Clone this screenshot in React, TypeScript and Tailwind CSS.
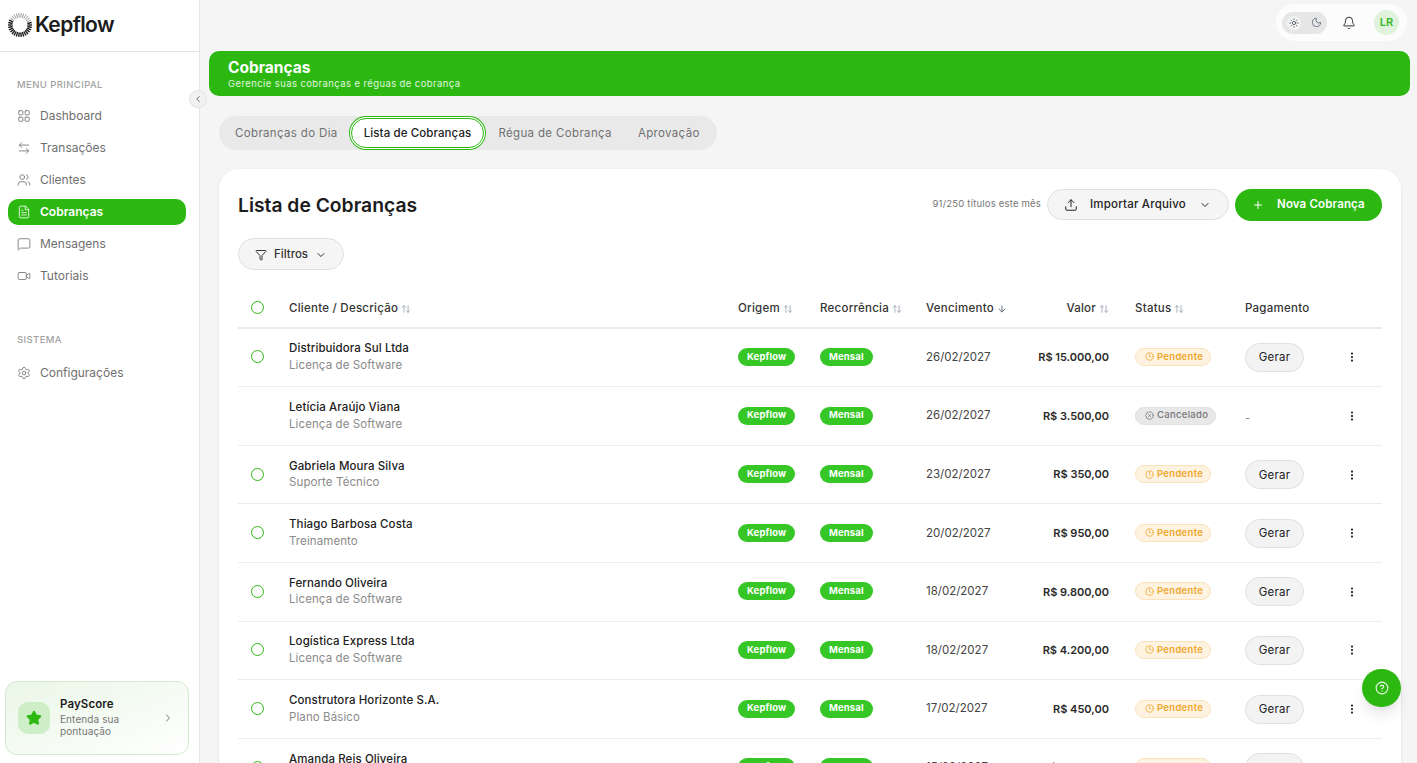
import {
  ArrowDown,
  ArrowLeftRight,
  ArrowUpDown,
  Bell,
  ChevronDown,
  ChevronLeft,
  ChevronRight,
  CircleHelp,
  CircleX,
  Clock,
  EllipsisVertical,
  FileText,
  Funnel,
  LayoutGrid,
  MessageSquare,
  Moon,
  Plus,
  Settings,
  Star,
  Sun,
  Upload,
  Users,
  Video,
} from "lucide-react";

const menu = [
  { label: "Dashboard", icon: LayoutGrid },
  { label: "Transações", icon: ArrowLeftRight },
  { label: "Clientes", icon: Users },
  { label: "Cobranças", icon: FileText, active: true },
  { label: "Mensagens", icon: MessageSquare },
  { label: "Tutoriais", icon: Video },
];

const rows = [
  { name: "Distribuidora Sul Ltda", desc: "Licença de Software", date: "26/02/2027", value: "R$ 15.000,00" },
  { name: "Letícia Araújo Viana", desc: "Licença de Software", date: "26/02/2027", value: "R$ 3.500,00", cancelled: true },
  { name: "Gabriela Moura Silva", desc: "Suporte Técnico", date: "23/02/2027", value: "R$ 350,00" },
  { name: "Thiago Barbosa Costa", desc: "Treinamento", date: "20/02/2027", value: "R$ 950,00" },
  { name: "Fernando Oliveira", desc: "Licença de Software", date: "18/02/2027", value: "R$ 9.800,00" },
  { name: "Logística Express Ltda", desc: "Licença de Software", date: "18/02/2027", value: "R$ 4.200,00" },
  { name: "Construtora Horizonte S.A.", desc: "Plano Básico", date: "17/02/2027", value: "R$ 450,00" },
  { name: "Amanda Reis Oliveira", desc: "Consultoria", date: "15/02/2027", value: "R$ 2.800,00" },
];

const gridCols = "grid grid-cols-[51px_449px_82px_106px_96px_113px_110px_77px_60px] items-center";

function Logo() {
  const rays = Array.from({ length: 30 }, (_, i) => i * 12);
  return (
    <svg width="26" height="26" viewBox="0 0 26 26" className="shrink-0">
      {rays.map((deg) => {
        const rad = (deg * Math.PI) / 180;
        // thick on the right and bottom, hairline on the upper left
        const thick = deg < 215 || deg > 345;
        return (
          <line
            key={deg}
            x1={13 + 7.5 * Math.cos(rad)}
            y1={13 + 7.5 * Math.sin(rad)}
            x2={13 + 12 * Math.cos(rad)}
            y2={13 + 12 * Math.sin(rad)}
            stroke={thick ? "#1c1c1c" : "#555"}
            strokeWidth={thick ? 1.4 : 0.6}
          />
        );
      })}
    </svg>
  );
}

function SortHead({ label }: { label: string }) {
  return (
    <span className="flex items-center gap-[3px]">
      {label}
      <ArrowUpDown className="w-[10px] h-[10px] text-gray-400" />
    </span>
  );
}

function Sidebar() {
  return (
    <aside className="relative w-[200px] shrink-0 h-full flex flex-col bg-white border-r border-[#e6e6e6]">
      <div className="h-[52px] shrink-0 flex items-center gap-[2px] pl-[7px] border-b border-[#e4e4e4] pb-px">
        <Logo />
        <span className="text-[21px] font-semibold text-[#1c1c1c] tracking-[-0.6px]">Kepflow</span>
      </div>

      <button className="absolute left-[189px] top-[90px] w-[18px] h-[18px] rounded-full bg-[#f1f1f1] border border-[#e2e2e2] flex items-center justify-center text-gray-600">
        <ChevronLeft className="w-[10px] h-[10px]" />
      </button>

      <p className="mt-[26px] ml-[17px] text-[9.5px] tracking-[0.4px] text-[#a3a3a3] font-medium">MENU PRINCIPAL</p>
      <nav className="mt-[11px] pl-2 pr-[13px] flex flex-col gap-1.5">
        {menu.map((item) => (
          <a
            key={item.label}
            className={`h-[26px] flex items-center gap-[9px] pl-[9px] rounded-[10px] text-[12px] ${
              item.active ? "bg-[#2cb811] text-white font-semibold" : "text-[#6f6f6f]"
            }`}
          >
            <item.icon className="w-[14px] h-[14px]" strokeWidth={1.4} />
            {item.label}
          </a>
        ))}
      </nav>

      <p className="mt-[44px] ml-[17px] text-[9.5px] tracking-[0.4px] text-[#a3a3a3] font-medium">SISTEMA</p>
      <div className="mt-3 pl-2 pr-[13px]">
        <a className="h-[26px] flex items-center gap-[9px] pl-[9px] text-[12px] text-[#6f6f6f]">
          <Settings className="w-[14px] h-[14px]" strokeWidth={1.4} />
          Configurações
        </a>
      </div>

      <div className="mt-auto ml-[5px] mr-[10px] mb-2 h-[74px] rounded-[12px] border border-[#d3ebce] bg-gradient-to-br from-[#eaf7e7] to-white flex items-center pl-3 pr-[14px]">
        <div className="w-8 h-8 rounded-[10px] bg-[#cdeec6] flex items-center justify-center shrink-0">
          <Star className="w-4 h-4 text-[#2cb811] fill-[#2cb811]" />
        </div>
        <div className="ml-[10px] flex-1 leading-none tracking-[0.1px]">
          <p className="text-[11.5px] font-semibold text-[#1c1c1c] mb-[3px]">PayScore</p>
          <p className="text-[10px] leading-[12px] text-[#777]">
            Entenda sua
            <br />
            pontuação
          </p>
        </div>
        <ChevronRight className="w-3 h-3 text-gray-500" />
      </div>
    </aside>
  );
}

function Row({ row }: { row: (typeof rows)[number] }) {
  return (
    <div className={`${gridCols} h-[58.6px] border-b border-[#ececec]`}>
      <div className="pl-[13px] -mt-px">
        {!row.cancelled && <span className="block w-[13px] h-[13px] rounded-full border border-[#2cb811]" />}
      </div>
      <div className="leading-none tracking-[0.1px]">
        <p className="text-[11.5px] font-medium text-[#222] mb-[5px]">{row.name}</p>
        <p className="text-[11.5px] text-[#8a8a8a]">{row.desc}</p>
      </div>
      <div className="flex -mt-px">
        <span className="flex items-center h-[18px] px-[9px] rounded-full bg-[#36c726] text-white text-[9.5px] font-bold tracking-[0.15px]">
          Kepflow
        </span>
      </div>
      <div className="flex -mt-px">
        <span className="flex items-center h-[18px] px-[9px] rounded-full bg-[#36c726] text-white text-[9.5px] font-bold tracking-[0.15px]">
          Mensal
        </span>
      </div>
      <div className="text-[11.5px] text-[#444]">{row.date}</div>
      <div className="pr-[26px] text-right text-[11px] font-semibold text-[#2a2a2a]">{row.value}</div>
      <div className="flex -mt-px">
        {row.cancelled ? (
          <span className="flex items-center gap-[3px] h-[18px] pl-[9px] pr-[7px] rounded-full bg-[#e8e8e8] border border-[#e0e0e0] text-[#777] text-[9.5px] font-medium tracking-[0.3px]">
            <CircleX className="w-[9px] h-[9px]" />
            Cancelado
          </span>
        ) : (
          <span className="flex items-center gap-[3px] h-[18px] pl-[9px] pr-[7px] rounded-full bg-[#fdf3e0] border border-[#fae3bb] text-[#eea62b] text-[9.5px] font-semibold tracking-[0.3px]">
            <Clock className="w-[9px] h-[9px]" />
            Pendente
          </span>
        )}
      </div>
      <div>
        {row.cancelled ? (
          <span className="text-[11px] text-[#888]">-</span>
        ) : (
          <button className="block w-[59px] h-[29px] pt-px rounded-full bg-[#f3f3f3] border border-[#e0e0e0] text-[11.5px] tracking-[0.2px] text-[#222]">
            Gerar
          </button>
        )}
      </div>
      <div className="flex justify-center">
        <EllipsisVertical className="w-3 h-3 text-[#222]" strokeWidth={2.5} />
      </div>
    </div>
  );
}

export default function App() {
  return (
    <div className="relative h-screen flex overflow-hidden bg-[#f5f5f5] font-['Inter',sans-serif]">
      <Sidebar />

      <main className="flex-1 min-w-0 flex flex-col">
        <div className="h-[51px] shrink-0 flex justify-end items-start pt-1 pr-[10px]">
          <div className="h-[37px] w-[131px] rounded-full bg-white/70 flex items-center pl-[6px] pr-2">
            <div className="w-[45px] h-[22px] rounded-full bg-[#e6e6e6] flex items-center justify-between px-[5px]">
              <span className="w-[14px] h-[14px] rounded-full bg-[#f4f4f4] flex items-center justify-center">
                <Sun className="w-[10px] h-[10px] text-gray-600" />
              </span>
              <Moon className="w-[11px] h-[11px] text-gray-500" />
            </div>
            <Bell className="w-[14px] h-[14px] text-[#222] ml-[15px]" strokeWidth={1.6} />
            <span className="ml-auto w-[25px] h-[25px] rounded-full bg-[#e0f2dc] flex items-center justify-center text-[11px] font-semibold text-[#36b82a]">
              LR
            </span>
          </div>
        </div>

        <div className="ml-[9px] mr-[7px] h-[45px] shrink-0 rounded-[10px] bg-[#2cb811] pl-[19px] pt-2 text-white">
          <h1 className="text-[15.5px] font-bold leading-[17px]">Cobranças</h1>
          <p className="text-[9.5px] leading-[12px] mt-[2px] tracking-[0.4px] text-white/85">
            Gerencie suas cobranças e réguas de cobrança
          </p>
        </div>

        <div className="mt-5 ml-[19px] mr-4">
          <div className="inline-flex items-center h-[34px] rounded-full bg-[#e9e9e9] px-[4px] pt-px text-[11.5px] text-[#717171] tracking-[0.35px]">
            <span className="h-[26px] flex items-center px-[12px]">Cobranças do Dia</span>
            <span className="ml-px mr-[2px] -mt-px h-[30px] flex items-center px-[12px] pt-px rounded-full bg-white border border-[#2cb811] ring-1 ring-[#2cb811] ring-offset-1 ring-offset-white font-medium tracking-[0.1px] text-[#222]">
              Lista de Cobranças
            </span>
            <span className="h-[26px] flex items-center px-[12px]">Régua de Cobrança</span>
            <span className="h-[26px] flex items-center pl-[14px] pr-[13px]">Aprovação</span>
          </div>

          <section className="mt-[19px] rounded-t-[20px] bg-white shadow-sm px-[19px] pt-5 pb-10">
            <div className="flex items-center h-[31px]">
              <h2 className="text-[19.3px] font-semibold text-[#1c1c1c] pt-px">Lista de Cobranças</h2>
              <span className="ml-auto text-[9.5px] tracking-[0.2px] text-[#777] mr-[6px]">91/250 títulos este mês</span>
              <button className="w-[182px] h-[31px] pt-px rounded-full bg-[#f5f5f5] border border-[#e0e0e0] flex items-center pl-4 pr-[17px] text-[11.5px] font-medium tracking-[0.2px] text-[#222]">
                <Upload className="w-[14px] h-[14px] mr-3" strokeWidth={1.7} />
                Importar Arquivo
                <ChevronDown className="w-3 h-3 ml-auto" />
              </button>
              <button className="ml-[6px] w-[147px] h-[32px] pt-px rounded-full bg-[#2cb811] flex items-center pl-[17px] text-[11.5px] font-semibold tracking-[0.15px] text-white">
                <Plus className="w-3 h-3 mr-[13px]" />
                Nova Cobrança
              </button>
            </div>

            <button className="mt-[18px] w-[106px] h-[32px] pt-px rounded-full bg-[#f5f5f5] border border-[#e0e0e0] flex items-center pl-4 gap-[7px] text-[11.5px] font-medium text-[#333]">
              <Funnel className="w-3 h-3" />
              Filtros
              <ChevronDown className="w-3 h-3" />
            </button>

            <div className={`${gridCols} mt-[18.7px] h-[40px] pt-[2px] border-b-2 border-[#ececec] text-[11.5px] font-medium tracking-[0.25px] text-[#333]`}>
              <div className="pl-[13px] -mt-[3px]">
                <span className="block w-[13px] h-[13px] rounded-full border border-[#2cb811]" />
              </div>
              <SortHead label="Cliente / Descrição" />
              <SortHead label="Origem" />
              <SortHead label="Recorrência" />
              <span className="flex items-center gap-[3px]">
                Vencimento
                <ArrowDown className="w-[10px] h-[10px] text-gray-600" />
              </span>
              <div className="pr-[26px] flex justify-end">
                <SortHead label="Valor" />
              </div>
              <SortHead label="Status" />
              <span>Pagamento</span>
              <span />
            </div>

            {rows.map((row) => (
              <Row key={row.name} row={row} />
            ))}
          </section>
        </div>
      </main>

      <button className="absolute left-[1362px] top-[669px] w-[39px] h-[38px] rounded-full bg-[#2cb811] shadow-lg flex items-center justify-center text-white/90">
        <CircleHelp className="w-[14px] h-[14px]" />
      </button>
    </div>
  );
}
